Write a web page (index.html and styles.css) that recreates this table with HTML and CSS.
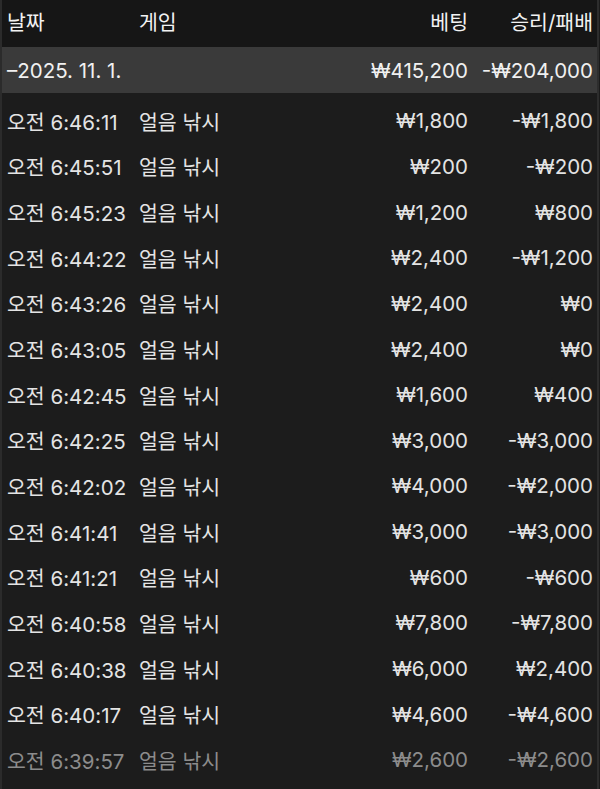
FILE: index.html
```html
<!DOCTYPE html>
<html lang="ko">
<head>
<meta charset="utf-8">
<link rel="stylesheet" href="styles.css">
</head>
<body>
<div class="table">
  <div class="row head">
    <div class="c-date">날짜</div><div class="c-game">게임</div><div class="c-bet">베팅</div><div class="c-win">승리/패배</div>
  </div>
  <div class="row group">
    <div class="c-date">–2025. 11. 1.</div><div class="c-game"></div><div class="c-bet">₩415,200</div><div class="c-win">-₩204,000</div>
  </div>
  <div class="list">
    <div class="row item"><div class="c-date">오전 6:46:11</div><div class="c-game">얼음 낚시</div><div class="c-bet">₩1,800</div><div class="c-win">-₩1,800</div></div>
    <div class="row item"><div class="c-date">오전 6:45:51</div><div class="c-game">얼음 낚시</div><div class="c-bet">₩200</div><div class="c-win">-₩200</div></div>
    <div class="row item"><div class="c-date">오전 6:45:23</div><div class="c-game">얼음 낚시</div><div class="c-bet">₩1,200</div><div class="c-win">₩800</div></div>
    <div class="row item"><div class="c-date">오전 6:44:22</div><div class="c-game">얼음 낚시</div><div class="c-bet">₩2,400</div><div class="c-win">-₩1,200</div></div>
    <div class="row item"><div class="c-date">오전 6:43:26</div><div class="c-game">얼음 낚시</div><div class="c-bet">₩2,400</div><div class="c-win">₩0</div></div>
    <div class="row item"><div class="c-date">오전 6:43:05</div><div class="c-game">얼음 낚시</div><div class="c-bet">₩2,400</div><div class="c-win">₩0</div></div>
    <div class="row item"><div class="c-date">오전 6:42:45</div><div class="c-game">얼음 낚시</div><div class="c-bet">₩1,600</div><div class="c-win">₩400</div></div>
    <div class="row item"><div class="c-date">오전 6:42:25</div><div class="c-game">얼음 낚시</div><div class="c-bet">₩3,000</div><div class="c-win">-₩3,000</div></div>
    <div class="row item"><div class="c-date">오전 6:42:02</div><div class="c-game">얼음 낚시</div><div class="c-bet">₩4,000</div><div class="c-win">-₩2,000</div></div>
    <div class="row item"><div class="c-date">오전 6:41:41</div><div class="c-game">얼음 낚시</div><div class="c-bet">₩3,000</div><div class="c-win">-₩3,000</div></div>
    <div class="row item"><div class="c-date">오전 6:41:21</div><div class="c-game">얼음 낚시</div><div class="c-bet">₩600</div><div class="c-win">-₩600</div></div>
    <div class="row item"><div class="c-date">오전 6:40:58</div><div class="c-game">얼음 낚시</div><div class="c-bet">₩7,800</div><div class="c-win">-₩7,800</div></div>
    <div class="row item"><div class="c-date">오전 6:40:38</div><div class="c-game">얼음 낚시</div><div class="c-bet">₩6,000</div><div class="c-win">₩2,400</div></div>
    <div class="row item"><div class="c-date">오전 6:40:17</div><div class="c-game">얼음 낚시</div><div class="c-bet">₩4,600</div><div class="c-win">-₩4,600</div></div>
    <div class="row item dim"><div class="c-date">오전 6:39:57</div><div class="c-game">얼음 낚시</div><div class="c-bet">₩2,600</div><div class="c-win">-₩2,600</div></div>
  </div>
</div>
</body>
</html>
```
FILE: styles.css
```css
html, body {
  margin: 0;
  padding: 0;
  background: #1b1b1b;
  height: 100%;
  overflow: hidden;
}
.table {
  width: 595px;
  height: 789px;
  border-left: 2px solid #2b2b2b;
  border-right: 2px solid #2d2d2d;
  background: #1c1c1c;
  font-family: Inter, "Noto Sans CJK KR", sans-serif;
  font-size: 20.5px;
  color: #e4e4e4;
  overflow: hidden;
}
.row {
  display: grid;
  grid-template-columns: 132px 1fr 200px 125px;
  align-items: center;
  padding: 0 4px 0 5px;
  white-space: nowrap;
}
.c-bet, .c-win { text-align: right; }
.head {
  height: 47px;
  background: #161616;
  color: #f2f2f2;
  align-items: start;
  padding-top: 6px;
  box-sizing: border-box;
}
.group {
  height: 46px;
  background: #3a3a3a;
  color: #f0f0f0;
}
.list {
  padding-top: 5px;
}
.item {
  height: 45.65px;
}
.dim { color: #8c8c8c; }
```
